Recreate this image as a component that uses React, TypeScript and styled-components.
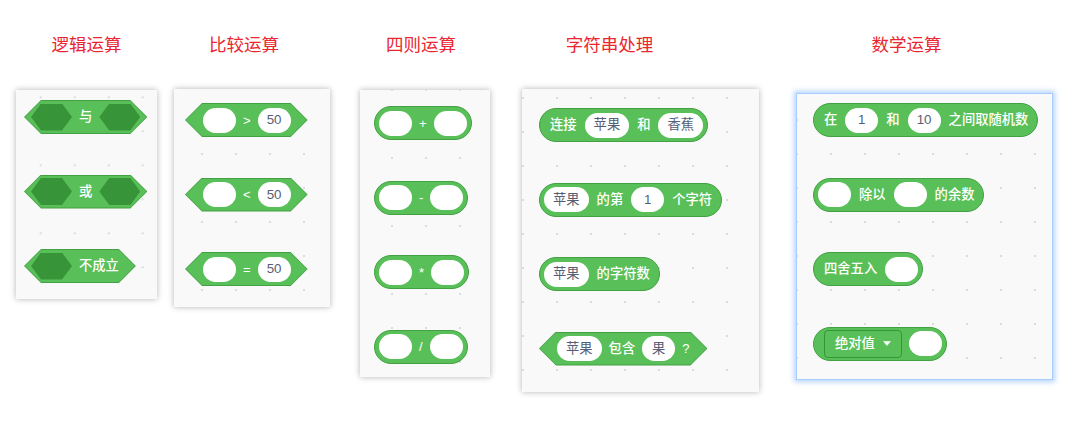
import React from "react";
import styled, { createGlobalStyle, css } from "styled-components";

const Global = createGlobalStyle`
  html, body { margin: 0; padding: 0; background: #ffffff; }
  body { font-family: "Noto Sans CJK SC", "Liberation Sans", sans-serif; }
`;

const GREEN = "#59c059";
const DARK = "#389438";
const EDGE = "#43a143";

const Page = styled.div`
  display: flex;
  align-items: flex-start;
  padding-left: 16px;
  width: 1084px;
  height: 423px;
  box-sizing: border-box;
  overflow: hidden;
`;

const Column = styled.section<{ $ml: number }>`
  display: flex;
  flex-direction: column;
  margin-left: ${(p) => p.$ml}px;
`;

const Title = styled.h2<{ $shift: number }>`
  margin: 32px 0 0;
  padding-right: ${(p) => p.$shift * 2}px;
  height: 24px;
  line-height: 24px;
  text-align: center;
  font-family: "Noto Sans CJK SC", sans-serif;
  font-size: 17.5px;
  font-weight: 400;
  color: #ea2630;
  white-space: nowrap;
`;

const Panel = styled.div<{
  $w: number;
  $h: number;
  $mt: number;
  $pt: number;
  $pl: number;
  $gx: number;
  $gy: number;
  $active?: boolean;
}>`
  box-sizing: border-box;
  width: ${(p) => p.$w}px;
  height: ${(p) => p.$h}px;
  margin-top: ${(p) => p.$mt}px;
  padding: ${(p) => p.$pt}px 0 0 ${(p) => p.$pl}px;
  display: flex;
  flex-direction: column;
  gap: 40.5px;
  background-color: #f9f9f9;
  background-image: radial-gradient(circle at center, #dcdcdc 0 0.9px, transparent 1.4px);
  background-size: 34px 34px;
  background-position: ${(p) => p.$gx - 17}px ${(p) => p.$gy - 17}px;
  ${(p) =>
    p.$active
      ? css`
          border: 1px solid #a9cdfc;
          box-shadow: 0 0 5px 2px rgba(120, 175, 255, 0.55);
        `
      : css`
          box-shadow: 0 0 6px rgba(0, 0, 0, 0.3);
        `}
`;

const Label = styled.span`
  position: relative;
  color: #ffffff;
  font-family: "Liberation Sans", "Noto Sans CJK SC", sans-serif;
  font-size: 13.3px;
  font-weight: 500;
  line-height: 1;
  white-space: nowrap;
`;

const Op = styled(Label)`
  font-size: 13px;
  font-weight: 400;
`;

const Slot = styled.span`
  position: relative;
  display: inline-flex;
  align-items: center;
  justify-content: center;
  box-sizing: border-box;
  min-width: 33px;
  height: 25px;
  padding: 0 9px;
  border-radius: 12.5px;
  background: #ffffff;
  color: #575e75;
  font-family: "Liberation Sans", "Noto Sans CJK SC", sans-serif;
  font-size: 13.3px;
  line-height: 1;
  white-space: nowrap;
`;

const Reporter = styled.div<{ $gap?: number }>`
  display: inline-flex;
  align-items: center;
  align-self: flex-start;
  box-sizing: border-box;
  height: 34px;
  padding: 0 4px;
  gap: ${(p) => p.$gap ?? 8}px;
  background: ${GREEN};
  border: 1px solid ${EDGE};
  border-radius: 17px;
  & > ${Label}:first-child {
    margin-left: 6px;
  }
  & > ${Label}:last-child {
    margin-right: 5px;
  }
`;

const Hex = styled.div<{ $pl: number; $pr: number }>`
  position: relative;
  display: inline-flex;
  align-items: center;
  align-self: flex-start;
  box-sizing: border-box;
  height: 34px;
  padding: 0 ${(p) => p.$pr}px 0 ${(p) => p.$pl}px;
  gap: 7px;
  background: ${EDGE};
  clip-path: polygon(17px 0, calc(100% - 17px) 0, 100% 50%, calc(100% - 17px) 100%, 17px 100%, 0 50%);
  &::before {
    content: "";
    position: absolute;
    inset: 1px;
    background: ${GREEN};
    clip-path: polygon(16px 0, calc(100% - 16px) 0, 100% 50%, calc(100% - 16px) 100%, 16px 100%, 0 50%);
  }
`;

const HoleHex = styled.span`
  position: relative;
  display: block;
  width: 41px;
  height: 27px;
  background: ${DARK};
  clip-path: polygon(10px 0, calc(100% - 10px) 0, 100% 50%, calc(100% - 10px) 100%, 10px 100%, 0 50%);
`;

const Dropdown = styled.span`
  display: inline-flex;
  align-items: center;
  gap: 8px;
  box-sizing: border-box;
  height: 28px;
  margin-left: 6px;
  padding: 0 10px 0 10px;
  border: 1px solid ${DARK};
  border-radius: 4px;
  background: ${GREEN};
`;

const Caret = () => (
  <svg width="8" height="5" viewBox="0 0 8 5" aria-hidden="true">
    <path d="M0.6 0.4 H7.4 L4 4.6 Z" fill="#ffffff" stroke="#ffffff" strokeWidth="0.6" strokeLinejoin="round" />
  </svg>
);

export default function App() {
  return (
    <>
      <Global />
      <Page>
        <Column $ml={0}>
          <Title $shift={0}>逻辑运算</Title>
          <Panel $w={141} $h={209} $mt={34} $pt={10} $pl={8} $gx={24.7} $gy={7.3}>
            <Hex $pl={7} $pr={7}>
              <HoleHex />
              <Label>与</Label>
              <HoleHex />
            </Hex>
            <Hex $pl={7} $pr={7}>
              <HoleHex />
              <Label>或</Label>
              <HoleHex />
            </Hex>
            <Hex $pl={7} $pr={17}>
              <HoleHex />
              <Label>不成立</Label>
            </Hex>
          </Panel>
        </Column>

        <Column $ml={17}>
          <Title $shift={8}>比较运算</Title>
          <Panel $w={156} $h={218} $mt={33} $pt={14} $pl={11} $gx={28} $gy={31}>
            <Hex $pl={18} $pr={17}>
              <Slot />
              <Op>&gt;</Op>
              <Slot>50</Slot>
            </Hex>
            <Hex $pl={18} $pr={17}>
              <Slot />
              <Op>&lt;</Op>
              <Slot>50</Slot>
            </Hex>
            <Hex $pl={18} $pr={17}>
              <Slot />
              <Op>=</Op>
              <Slot>50</Slot>
            </Hex>
          </Panel>
        </Column>

        <Column $ml={30}>
          <Title $shift={4}>四则运算</Title>
          <Panel $w={130} $h={287} $mt={34} $pt={16} $pl={14} $gx={32} $gy={0}>
            <Reporter $gap={7}>
              <Slot />
              <Op>+</Op>
              <Slot />
            </Reporter>
            <Reporter $gap={7}>
              <Slot />
              <Op>-</Op>
              <Slot />
            </Reporter>
            <Reporter $gap={7}>
              <Slot />
              <Op>*</Op>
              <Slot />
            </Reporter>
            <Reporter $gap={7}>
              <Slot />
              <Op>/</Op>
              <Slot />
            </Reporter>
          </Panel>
        </Column>

        <Column $ml={32}>
          <Title $shift={31}>字符串处理</Title>
          <Panel $w={237} $h={303} $mt={33} $pt={19} $pl={17} $gx={1} $gy={9}>
            <Reporter>
              <Label>连接</Label>
              <Slot>苹果</Slot>
              <Label>和</Label>
              <Slot>香蕉</Slot>
            </Reporter>
            <Reporter>
              <Slot>苹果</Slot>
              <Label>的第</Label>
              <Slot>1</Slot>
              <Label>个字符</Label>
            </Reporter>
            <Reporter>
              <Slot>苹果</Slot>
              <Label>的字符数</Label>
            </Reporter>
            <Hex $pl={18} $pr={18}>
              <Slot>苹果</Slot>
              <Label>包含</Label>
              <Slot>果</Slot>
              <Op>?</Op>
            </Hex>
          </Panel>
        </Column>

        <Column $ml={37}>
          <Title $shift={18}>数学运算</Title>
          <Panel $w={257} $h={287} $mt={37} $pt={9} $pl={16} $gx={0} $gy={26} $active>
            <Reporter>
              <Label>在</Label>
              <Slot>1</Slot>
              <Label>和</Label>
              <Slot>10</Slot>
              <Label>之间取随机数</Label>
            </Reporter>
            <Reporter>
              <Slot />
              <Label>除以</Label>
              <Slot />
              <Label>的余数</Label>
            </Reporter>
            <Reporter>
              <Label>四舍五入</Label>
              <Slot />
            </Reporter>
            <Reporter $gap={7}>
              <Dropdown>
                <Label>绝对值</Label>
                <Caret />
              </Dropdown>
              <Slot />
            </Reporter>
          </Panel>
        </Column>
      </Page>
    </>
  );
}
